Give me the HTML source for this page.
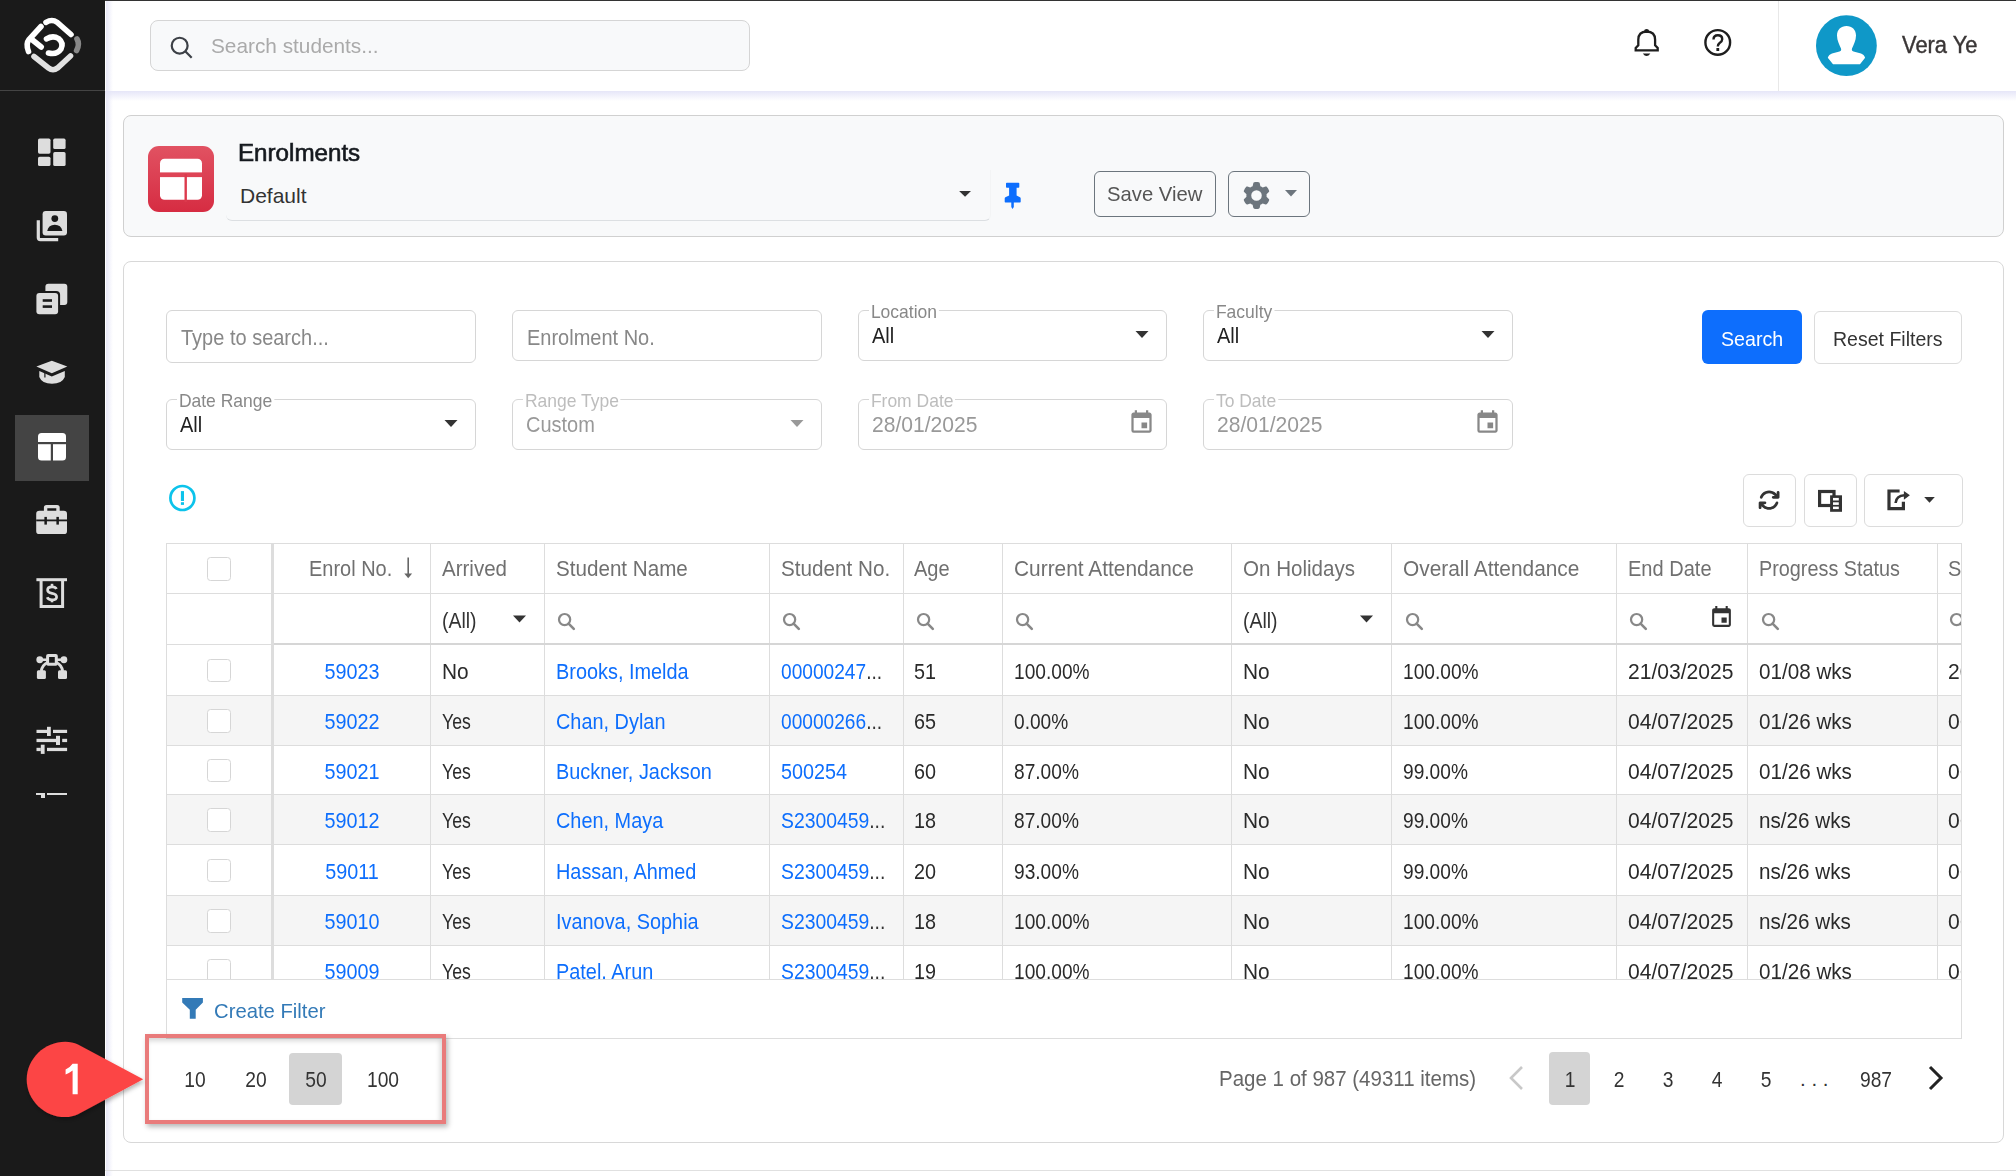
<!DOCTYPE html><html><head><meta charset="utf-8"><style>
html,body{margin:0;padding:0;width:2016px;height:1176px;overflow:hidden;background:#fff;font-family:"Liberation Sans", sans-serif;}
.t{position:absolute;white-space:nowrap;}
</style></head><body>
<div style="position:absolute;left:0px;top:0px;width:2016px;height:1px;background:#333"></div>
<div style="position:absolute;left:0px;top:0px;width:105px;height:1176px;background:#1a1a1a"></div>
<div style="position:absolute;left:0px;top:90px;width:105px;height:1px;background:#444"></div>
<svg style="position:absolute;left:0px;top:0px;" width="104" height="90" viewBox="0 0 104 90">
<g fill="none" stroke-linecap="round" stroke-width="5.6">
<path d="M46 22.3 Q52 18.8 57 22.2 L71 34.5" stroke="#fff"/>
<path d="M41 26.5 L29 39.5 Q25.5 44 28.5 51.5" stroke="#fff"/>
<path d="M32.5 40 L41.2 47" stroke="#fff"/>
<path d="M46.5 38.8 Q53 35 58.5 38.5 Q64 43 61 49 Q57 55 48.5 53" stroke="#fff"/>
<path d="M77 39 Q80 44 76.6 50.5" stroke="#888"/>
<path d="M34 56.5 L48.5 68 Q53 71.5 57.5 68 L70.5 56" stroke="#e2e2e2"/>
</g></svg>
<div style="position:absolute;left:15px;top:415px;width:74px;height:66px;background:#444"></div>
<svg style="position:absolute;left:30px;top:130px;" width="44" height="120" viewBox="30 130 44 120">
<rect x="38" y="138.6" width="12.5" height="15.1" rx="1.6" fill="#ddd"/>
<rect x="53.2" y="138.6" width="12.4" height="10.4" rx="1.6" fill="#ddd"/>
<rect x="38" y="156.7" width="12.5" height="9.3" rx="1.6" fill="#ddd"/>
<rect x="53.2" y="152.1" width="12.4" height="13.9" rx="1.6" fill="#ddd"/>
<rect x="42.6" y="211" width="24.4" height="24.4" rx="3.2" fill="#ddd"/>
<circle cx="54.8" cy="218.6" r="3.4" fill="#1a1a1a"/>
<path d="M47.2 230.9 Q48.5 224.8 54.8 224.8 Q61.1 224.8 62.4 230.9 Z" fill="#1a1a1a"/>
<path d="M38.3 220.2 L38.3 237.5 Q38.3 239.6 40.4 239.6 L58.2 239.6" fill="none" stroke="#ddd" stroke-width="3.2"/></svg>
<svg style="position:absolute;left:30px;top:275px;" width="44" height="44" viewBox="30 275 44 44">
<rect x="45.4" y="283.8" width="21.9" height="21.2" rx="3" fill="#ddd"/>
<rect x="34.4" y="291" width="25.7" height="25.2" rx="4" fill="#1a1a1a"/>
<rect x="36.4" y="293" width="21.7" height="21.2" rx="3" fill="#ddd"/>
<rect x="42.7" y="299.2" width="9.3" height="2.6" fill="#1a1a1a"/>
<rect x="42.7" y="305.3" width="9.3" height="2.6" fill="#1a1a1a"/></svg>
<svg style="position:absolute;left:30px;top:350px;" width="44" height="44" viewBox="30 350 44 44">
<path d="M36.4 366.4 L51.8 360.8 L67.3 366.4 L51.8 373.3 Z" fill="#ddd"/>
<path d="M39.3 371 L39.3 377 Q42 383.8 52 383.8 Q62 383.8 64.8 377 L64.8 371 L51.8 376.5 Z" fill="#ddd"/>
<rect x="44.3" y="372.5" width="1.2" height="5" fill="#1a1a1a"/></svg>
<svg style="position:absolute;left:30px;top:425px;" width="44" height="44" viewBox="30 425 44 44">
<rect x="38" y="433" width="28" height="27.5" rx="3.5" fill="#fff"/>
<rect x="38" y="442" width="28" height="2.2" fill="#444"/>
<rect x="50.8" y="442" width="2.2" height="20" fill="#444"/></svg>
<svg style="position:absolute;left:30px;top:497px;" width="44" height="44" viewBox="30 497 44 44">
<path d="M43.9 511 L43.9 507.5 Q43.9 504.9 46.5 504.9 L57.1 504.9 Q59.7 504.9 59.7 507.5 L59.7 511 L56.3 511 L56.3 508.3 L47.3 508.3 L47.3 511 Z" fill="#ddd"/>
<rect x="36.2" y="510.8" width="30.8" height="23.3" rx="3.2" fill="#ddd"/>
<rect x="36.2" y="519.5" width="30.8" height="1.8" fill="#1a1a1a"/>
<rect x="44.4" y="516.9" width="2.5" height="7.7" fill="#1a1a1a"/>
<rect x="56.4" y="516.9" width="2.5" height="7.7" fill="#1a1a1a"/></svg>
<svg style="position:absolute;left:30px;top:571px;" width="44" height="44" viewBox="30 571 44 44">
<rect x="36.4" y="578.2" width="30.6" height="3" fill="#ddd"/>
<path d="M41.1 581 L41.1 606.6 L62.6 606.6 L62.6 581" fill="none" stroke="#ddd" stroke-width="3"/>
<path d="M56.4 589 Q55.6 586.8 52 586.8 Q47.6 586.8 47.6 589.9 Q47.6 592.5 52 593.3 Q56.6 594.1 56.6 596.9 Q56.6 599.8 52 599.8 Q48.2 599.8 47.2 597.3" fill="none" stroke="#ddd" stroke-width="2.7"/>
<rect x="50.7" y="583.8" width="2.6" height="3.5" fill="#ddd"/><rect x="50.7" y="599.3" width="2.6" height="3" fill="#ddd"/></svg>
<svg style="position:absolute;left:30px;top:645px;" width="44" height="44" viewBox="30 645 44 44">
<line x1="39.75" y1="659.75" x2="47" y2="659.75" stroke="#ddd" stroke-width="2.6"/>
<line x1="57" y1="659.75" x2="63.9" y2="659.75" stroke="#ddd" stroke-width="2.6"/>
<circle cx="39.75" cy="659.75" r="3.4" fill="#ddd"/><circle cx="63.9" cy="659.75" r="3.4" fill="#ddd"/>
<path d="M47.5 662.5 Q42.2 665 41.3 671" fill="none" stroke="#ddd" stroke-width="3"/>
<path d="M56.4 662.5 Q61.7 665 62.6 671" fill="none" stroke="#ddd" stroke-width="3"/>
<rect x="47.6" y="655.5" width="8.7" height="8.7" rx="0.5" fill="none" stroke="#ddd" stroke-width="3"/>
<rect x="36.9" y="670.3" width="9" height="8.8" rx="1.5" fill="#ddd"/>
<rect x="58" y="670.3" width="9" height="8.8" rx="1.5" fill="#ddd"/></svg>
<svg style="position:absolute;left:30px;top:718px;" width="44" height="44" viewBox="30 718 44 44">
<rect x="36.5" y="729.8" width="10.5" height="3.2" fill="#ddd"/><rect x="47" y="726.8" width="3.8" height="9.2" fill="#ddd"/><rect x="53" y="729.8" width="14.1" height="3.2" fill="#ddd"/>
<rect x="36.5" y="738.8" width="19.5" height="3.3" fill="#ddd"/><rect x="56" y="735.8" width="4" height="9.2" fill="#ddd"/><rect x="62.2" y="738.8" width="4.9" height="3.3" fill="#ddd"/>
<rect x="36.5" y="747.8" width="4.3" height="3.3" fill="#ddd"/><rect x="40.8" y="744.7" width="3.8" height="9.2" fill="#ddd"/><rect x="47" y="747.8" width="20.1" height="3.3" fill="#ddd"/></svg>
<div style="position:absolute;left:36.4px;top:793px;width:8.5px;height:2.1px;background:#ddd"></div>
<div style="position:absolute;left:40.8px;top:793px;width:4.1px;height:5.1px;background:#ddd"></div>
<div style="position:absolute;left:47.1px;top:793px;width:20.1px;height:2.1px;background:#ddd"></div>
<div style="position:absolute;left:106px;top:1px;width:7px;height:1175px;background:linear-gradient(to right,#e8e8f8,rgba(240,240,255,0))"></div>
<div style="position:absolute;left:105px;top:1px;width:1px;height:1175px;background:#fff"></div>
<div style="position:absolute;left:116px;top:1px;width:1900px;height:90px;background:#fff"></div>
<div style="position:absolute;left:105px;top:91px;width:1911px;height:10px;background:linear-gradient(to bottom,#e6e6f8,rgba(246,246,255,0))"></div>
<div style="position:absolute;left:150px;top:20px;width:598px;height:49px;background:#f8f9fa;border:1px solid #d5d5d5;border-radius:8px"></div>
<svg style="position:absolute;left:167.5px;top:33.5px;" width="28" height="28" viewBox="0 0 24 24"><circle cx="10" cy="10" r="6.8" fill="none" stroke="#3c4046" stroke-width="1.9"/><line x1="15" y1="15" x2="20.3" y2="20.3" stroke="#3c4046" stroke-width="1.9" stroke-linecap="butt"/></svg>
<div class="t" style="left:211px;top:35.10px;font-size:21px;line-height:21px;color:#aaa;transform:scaleX(0.99);transform-origin:0 0;">Search students...</div>
<svg style="position:absolute;left:1625px;top:20px;" width="120" height="50" viewBox="1625 20 120 50"><path d="M1638.3 45.3 L1638.3 39.8 Q1638.3 31.7 1646.7 31.5 Q1655.1 31.7 1655.1 39.8 L1655.1 45.3 L1657.7 47.9 L1657.7 50.4 L1635.7 50.4 L1635.7 47.9 Z" fill="none" stroke="#1e1e1e" stroke-width="2.3" stroke-linejoin="miter"/><ellipse cx="1646.6" cy="30.6" rx="2.4" ry="1.6" fill="#1e1e1e"/><path d="M1642.8 53.5 Q1646.6 58.6 1650.4 53.5 Z" fill="#1e1e1e"/><circle cx="1717.75" cy="42.45" r="12.35" fill="none" stroke="#1e1e1e" stroke-width="2.4"/><path d="M1713.5 39.6 Q1713.5 35.3 1717.9 35.3 Q1722.2 35.3 1722.2 39.2 Q1722.2 41.3 1719.6 43 Q1717.8 44.3 1717.8 46.6" fill="none" stroke="#1e1e1e" stroke-width="2.4"/><rect x="1716.4" y="48" width="2.8" height="3" fill="#1e1e1e"/></svg>
<div style="position:absolute;left:1778px;top:1px;width:1px;height:90px;background:#e8e8e8"></div>
<svg style="position:absolute;left:1815px;top:15px;" width="62" height="62" viewBox="0 0 62 62"><circle cx="31.4" cy="30.65" r="30.4" fill="#0f98c8"/><path fill="#fff" d="M31.5 10.9 C26 10.9 22 14.5 22 20.5 C22 25.5 24.5 30 26 33.5 C26.5 35 26 36 24.5 36.6 L17 38.5 C15 39.2 13.5 40.5 12.8 42.8 L18 49.2 L45 49.2 L50.1 42.8 C49.4 40.5 48 39.2 46 38.5 L38.5 36.6 C37 36 36.5 35 37 33.5 C38.5 30 41 25.5 41 20.5 C41 14.5 37 10.9 31.5 10.9 Z"/></svg>
<div class="t" style="left:1902px;top:33.25px;font-size:24.3px;line-height:24.3px;color:#3a3636;transform:scaleX(0.9);transform-origin:0 0;-webkit-text-stroke:0.45px #3a3636">Vera Ye</div>
<div style="position:absolute;left:123px;top:115px;width:1879px;height:120px;background:#f8f9fa;border:1px solid #d0d0d0;border-radius:8px"></div>
<svg style="position:absolute;left:148px;top:146px;" width="66" height="66" viewBox="0 0 66 66"><defs><linearGradient id="rg" x1="0" y1="0" x2="0" y2="1"><stop offset="0" stop-color="#e15262"/><stop offset="1" stop-color="#d62c42"/></linearGradient></defs><rect width="66" height="66" rx="11" fill="url(#rg)"/><rect x="12" y="12.8" width="42" height="41" rx="4.5" fill="#fff"/><rect x="12" y="26.4" width="42" height="4.7" fill="#de4456"/><rect x="36.5" y="28" width="2.4" height="28" fill="#dc3a4d"/></svg>
<div class="t" style="left:238px;top:142.45px;font-size:23.5px;line-height:23.5px;color:#15191e;transform:scaleX(1.028);transform-origin:0 0;-webkit-text-stroke:0.6px #15191e">Enrolments</div>
<div style="position:absolute;left:226px;top:170px;width:764px;height:50px;border-bottom:1px solid #dcdfe2;border-right:1px solid #f3f4f5;border-radius:0 0 6px 6px"></div>
<div class="t" style="left:240px;top:185.00px;font-size:21px;line-height:21px;color:#333;">Default</div>
<svg style="position:absolute;left:958px;top:189px;" width="14" height="9" viewBox="0 0 14 9"><path d="M1.1 2 L13 2 L7.05 7.8 Z" fill="#333"/></svg>
<svg style="position:absolute;left:1000px;top:180px;" width="24" height="32" viewBox="1000 180 24 32"><path fill="#0d6efd" d="M1006.8 182.7 L1018.5 182.7 Q1019.3 182.7 1019.3 183.5 L1019.3 187 Q1019.3 187.7 1018.5 187.7 L1016.6 187.7 L1016.6 195.5 L1020 197.3 Q1020.7 197.8 1020.7 198.5 L1020.7 201.8 Q1020.7 202.6 1020 202.6 L1013.8 202.6 L1013.8 207 L1012.55 209 L1011.3 207 L1011.3 202.6 L1005.4 202.6 Q1004.7 202.6 1004.7 201.8 L1004.7 198.5 Q1004.7 197.8 1005.4 197.3 L1009.1 195.5 L1009.1 187.7 L1006.8 187.7 Q1006 187.7 1006 187 L1006 183.5 Q1006 182.7 1006.8 182.7 Z"/></svg>
<div style="position:absolute;left:1094px;top:171px;width:120px;height:44px;border:1px solid #6c757d;border-radius:6px"></div>
<div class="t" style="left:1107px;top:183.30px;font-size:21px;line-height:21px;color:#555;transform:scaleX(0.965);transform-origin:0 0;">Save View</div>
<div style="position:absolute;left:1228px;top:171px;width:80px;height:44px;border:1px solid #6c757d;border-radius:6px"></div>
<svg style="position:absolute;left:1243px;top:182px;" width="27" height="27" viewBox="0 0 512 512"><circle cx="256" cy="256" r="100" fill="#f8f9fa"/><path fill="#6c757d" d="M495.9 166.6c3.2 8.7 .5 18.4-6.4 24.6l-43.3 39.4c1.1 8.3 1.7 16.8 1.7 25.4s-.6 17.1-1.7 25.4l43.3 39.4c6.9 6.2 9.6 15.9 6.4 24.6c-4.4 11.9-9.7 23.3-15.8 34.3l-4.7 8.1c-6.6 11-14 21.4-22.1 31.2c-5.9 7.2-15.7 9.6-24.5 6.8l-55.7-17.7c-13.4 10.3-28.2 18.9-44 25.4l-12.5 57.1c-2 9.1-9 16.3-18.2 17.8c-13.8 2.3-28 3.5-42.5 3.5s-28.7-1.2-42.5-3.5c-9.2-1.5-16.2-8.7-18.2-17.8l-12.5-57.1c-15.8-6.5-30.6-15.1-44-25.4L83.1 425.9c-8.8 2.8-18.6 .3-24.5-6.8c-8.1-9.8-15.5-20.2-22.1-31.2l-4.7-8.1c-6.1-11-11.4-22.4-15.8-34.3c-3.2-8.7-.5-18.4 6.4-24.6l43.3-39.4C64.6 273.1 64 264.6 64 256s.6-17.1 1.7-25.4L22.4 191.2c-6.9-6.2-9.6-15.9-6.4-24.6c4.4-11.9 9.700-23.3 15.8-34.3l4.7-8.1c6.6-11 14-21.4 22.1-31.2c5.9-7.200 15.7-9.6 24.5-6.8l55.7 17.7c13.4-10.3 28.2-18.9 44-25.4l12.5-57.1c2-9.1 9-16.3 18.2-17.8C227.3 1.2 241.5 0 256 0s28.7 1.2 42.5 3.5c9.2 1.5 16.2 8.7 18.2 17.8l12.5 57.1c15.8 6.5 30.6 15.1 44 25.4l55.7-17.7c8.8-2.8 18.6-.3 24.5 6.8c8.1 9.8 15.5 20.2 22.1 31.2l4.7 8.1c6.1 11 11.4 22.4 15.8 34.3zM256 356a100 100 0 1 0 0-200 100 100 0 1 0 0 200z"/></svg>
<svg style="position:absolute;left:1284px;top:189px;" width="14" height="9" viewBox="0 0 14 9"><path d="M1 1 L13 1 L7 7.5 Z" fill="#6c757d"/></svg>
<div style="position:absolute;left:123px;top:261px;width:1879px;height:880px;background:#fff;border:1px solid #d8d8d8;border-radius:8px"></div>
<div style="position:absolute;left:105px;top:1170px;width:1911px;height:1px;background:#e0e0e0"></div>
<div style="position:absolute;left:166px;top:310px;width:308px;height:51px;border:1px solid #d6d6d6;border-radius:6px;background:#fff"></div>
<div class="t" style="left:181px;top:327.85px;font-size:21.5px;line-height:21.5px;color:#888;transform:scaleX(0.93);transform-origin:0 0;">Type to search...</div>
<div style="position:absolute;left:512px;top:310px;width:308px;height:49px;border:1px solid #d6d6d6;border-radius:6px;background:#fff"></div>
<div class="t" style="left:527px;top:327.85px;font-size:21.5px;line-height:21.5px;color:#888;transform:scaleX(0.93);transform-origin:0 0;">Enrolment No.</div>
<div style="position:absolute;left:858px;top:310px;width:307px;height:49px;border:1px solid #d6d6d6;border-radius:6px;background:#fff"></div>
<div class="t" style="left:869px;top:303.05px;font-size:18.5px;line-height:18.5px;color:#888;background:#fff;padding:0 2px;transform:scaleX(0.945);transform-origin:0 0">Location</div>
<div class="t" style="left:872px;top:325.95px;font-size:21.5px;line-height:21.5px;color:#222;transform:scaleX(0.93);transform-origin:0 0;">All</div>
<svg style="position:absolute;left:1135px;top:330px;" width="14" height="9" viewBox="0 0 14 9"><path d="M0.5 1 L13.5 1 L7 8 Z" fill="#333"/></svg>
<div style="position:absolute;left:1203px;top:310px;width:308px;height:49px;border:1px solid #d6d6d6;border-radius:6px;background:#fff"></div>
<div class="t" style="left:1214px;top:303.05px;font-size:18.5px;line-height:18.5px;color:#888;background:#fff;padding:0 2px;transform:scaleX(0.945);transform-origin:0 0">Faculty</div>
<div class="t" style="left:1217px;top:325.95px;font-size:21.5px;line-height:21.5px;color:#222;transform:scaleX(0.93);transform-origin:0 0;">All</div>
<svg style="position:absolute;left:1481px;top:330px;" width="14" height="9" viewBox="0 0 14 9"><path d="M0.5 1 L13.5 1 L7 8 Z" fill="#333"/></svg>
<div style="position:absolute;left:166px;top:399px;width:308px;height:49px;border:1px solid #d6d6d6;border-radius:6px;background:#fff"></div>
<div class="t" style="left:177px;top:392.05px;font-size:18.5px;line-height:18.5px;color:#888;background:#fff;padding:0 2px;transform:scaleX(0.945);transform-origin:0 0">Date Range</div>
<div class="t" style="left:180px;top:414.95px;font-size:21.5px;line-height:21.5px;color:#222;transform:scaleX(0.93);transform-origin:0 0;">All</div>
<svg style="position:absolute;left:444px;top:419px;" width="14" height="9" viewBox="0 0 14 9"><path d="M0.5 1 L13.5 1 L7 8 Z" fill="#333"/></svg>
<div style="position:absolute;left:512px;top:399px;width:308px;height:49px;border:1px solid #d6d6d6;border-radius:6px;background:#fff"></div>
<div class="t" style="left:523px;top:392.05px;font-size:18.5px;line-height:18.5px;color:#bdbdbd;background:#fff;padding:0 2px;transform:scaleX(0.945);transform-origin:0 0">Range Type</div>
<div class="t" style="left:526px;top:414.95px;font-size:21.5px;line-height:21.5px;color:#999;transform:scaleX(0.93);transform-origin:0 0;">Custom</div>
<svg style="position:absolute;left:790px;top:419px;" width="14" height="9" viewBox="0 0 14 9"><path d="M0.5 1 L13.5 1 L7 8 Z" fill="#999"/></svg>
<div style="position:absolute;left:858px;top:399px;width:307px;height:49px;border:1px solid #d6d6d6;border-radius:6px;background:#fff"></div>
<div class="t" style="left:869px;top:392.05px;font-size:18.5px;line-height:18.5px;color:#bdbdbd;background:#fff;padding:0 2px;transform:scaleX(0.945);transform-origin:0 0">From Date</div>
<div class="t" style="left:872px;top:414.95px;font-size:21.5px;line-height:21.5px;color:#999;transform:scaleX(0.98);transform-origin:0 0;">28/01/2025</div>
<svg style="position:absolute;left:1127.5px;top:408.5px;" width="27" height="27" viewBox="0 0 24 24"><path fill="#888" d="M17 12h-5v5h5v-5zM16 1v2H8V1H6v2H5c-1.11 0-1.99.9-1.99 2L3 19a2 2 0 0 0 2 2h14c1.1 0 2-.9 2-2V5c0-1.1-.9-2-2-2h-1V1h-2zm3 18H5V8h14v11z"/></svg>
<div style="position:absolute;left:1203px;top:399px;width:308px;height:49px;border:1px solid #d6d6d6;border-radius:6px;background:#fff"></div>
<div class="t" style="left:1214px;top:392.05px;font-size:18.5px;line-height:18.5px;color:#bdbdbd;background:#fff;padding:0 2px;transform:scaleX(0.945);transform-origin:0 0">To Date</div>
<div class="t" style="left:1217px;top:414.95px;font-size:21.5px;line-height:21.5px;color:#999;transform:scaleX(0.98);transform-origin:0 0;">28/01/2025</div>
<svg style="position:absolute;left:1473.5px;top:408.5px;" width="27" height="27" viewBox="0 0 24 24"><path fill="#888" d="M17 12h-5v5h5v-5zM16 1v2H8V1H6v2H5c-1.11 0-1.99.9-1.99 2L3 19a2 2 0 0 0 2 2h14c1.1 0 2-.9 2-2V5c0-1.1-.9-2-2-2h-1V1h-2zm3 18H5V8h14v11z"/></svg>
<div style="position:absolute;left:1702px;top:310px;width:100px;height:54px;background:#0d6efd;border-radius:6px"></div>
<div class="t" style="left:1721px;top:328.30px;font-size:21px;line-height:21px;color:#fff;transform:scaleX(0.935);transform-origin:0 0;">Search</div>
<div style="position:absolute;left:1814px;top:311px;width:146px;height:51px;border:1px solid #dcdcdc;border-radius:6px"></div>
<div class="t" style="left:1833px;top:328.30px;font-size:21px;line-height:21px;color:#333;transform:scaleX(0.93);transform-origin:0 0;">Reset Filters</div>
<svg style="position:absolute;left:168px;top:484px;" width="28" height="28" viewBox="0 0 28 28"><circle cx="14.4" cy="14" r="12" fill="none" stroke="#0cc3eb" stroke-width="2.7"/><rect x="12.9" y="7.1" width="3.1" height="9.9" fill="#0cc3eb"/><rect x="12.9" y="18.2" width="3.1" height="2.7" fill="#0cc3eb"/></svg>
<div style="position:absolute;left:1743px;top:474px;width:51px;height:51px;border:1px solid #dcdcdc;border-radius:6px"></div>
<div style="position:absolute;left:1804px;top:474px;width:51px;height:51px;border:1px solid #dcdcdc;border-radius:6px"></div>
<div style="position:absolute;left:1864px;top:474px;width:97px;height:51px;border:1px solid #dcdcdc;border-radius:6px"></div>
<svg style="position:absolute;left:1758.2px;top:488.6px;" width="22.2" height="22.2" viewBox="0 0 512 512"><path fill="#333" d="M105.1 202.6c7.7-21.8 20.2-42.3 37.8-59.8c62.5-62.5 163.8-62.5 226.3 0L386.3 160H352c-17.7 0-32 14.3-32 32s14.3 32 32 32H463.5c0 0 0 0 0 0h.4c17.7 0 32-14.3 32-32V80c0-17.7-14.3-32-32-32s-32 14.3-32 32v35.2L414.4 97.6c-87.5-87.5-229.3-87.5-316.8 0C73.2 122 55.6 150.7 44.8 181.400c-5.9 16.700 2.9 34.900 19.500 40.800s34.900-2.900 40.800-19.500zM39 289.300c-5 1.500-9.8 4.200-13.700 8.200c-4 4-6.700 8.800-8.100 14c-.3 1.200-.6 2.500-.8 3.800c-.3 1.700-.4 3.400-.4 5.100V432c0 17.700 14.300 32 32 32s32-14.300 32-32V396.900l17.600 17.500 0 0c87.500 87.400 229.300 87.400 316.700 0c24.400-24.400 42.100-53.100 52.900-83.700c5.900-16.700-2.900-34.900-19.500-40.800s-34.900 2.900-40.800 19.500c-7.700 21.800-20.200 42.300-37.800 59.800c-62.500 62.500-163.800 62.500-226.300 0l-.1-.1L125.600 352H160c17.700 0 32-14.300 32-32s-14.300-32-32-32H48.400c-1.600 0-3.200 .1-4.800 .3s-3.100 .5-4.600 1z"/></svg>
<svg style="position:absolute;left:1810px;top:485px;" width="40" height="32" viewBox="1810 485 40 32"><rect x="1819.6" y="491.5" width="14.4" height="14" fill="none" stroke="#333" stroke-width="3.2"/><rect x="1830.1" y="495.3" width="11.9" height="16.5" fill="#333"/><rect x="1833" y="497.9" width="5.8" height="2.6" fill="#fff"/><rect x="1833" y="502.3" width="5.8" height="2.6" fill="#fff"/><rect x="1833" y="506.6" width="5.8" height="2.5" fill="#fff"/></svg>
<svg style="position:absolute;left:1880px;top:485px;" width="60" height="32" viewBox="1880 485 60 32"><path d="M1899.6 491 L1889 491 L1889 508.6 L1903.4 508.6 L1903.4 501.7" fill="none" stroke="#333" stroke-width="3.2"/><path d="M1895.6 503 Q1896.3 495.6 1904.5 495.3" fill="none" stroke="#333" stroke-width="2.6"/><path d="M1903.9 490.9 L1909.9 495.3 L1903.9 499.7 Z" fill="#333"/><path d="M1924.2 496.9 L1934.8 496.9 L1929.5 502.7 Z" fill="#333"/></svg>
<div style="position:absolute;left:166px;top:543px;width:1796px;height:436.5px;overflow:hidden">
<div style="position:absolute;left:0px;top:152px;width:1796px;height:50px;background:#f5f5f5"></div>
<div style="position:absolute;left:0px;top:251px;width:1796px;height:50px;background:#f5f5f5"></div>
<div style="position:absolute;left:0px;top:352px;width:1796px;height:50px;background:#f5f5f5"></div>
<div style="position:absolute;left:0px;top:0px;width:1796px;height:1px;background:#ddd"></div>
<div style="position:absolute;left:0px;top:50px;width:1796px;height:1px;background:#ddd"></div>
<div style="position:absolute;left:0px;top:101px;width:1796px;height:1px;background:#ddd"></div>
<div style="position:absolute;left:0px;top:152px;width:1796px;height:1px;background:#ddd"></div>
<div style="position:absolute;left:0px;top:202px;width:1796px;height:1px;background:#ddd"></div>
<div style="position:absolute;left:0px;top:251px;width:1796px;height:1px;background:#ddd"></div>
<div style="position:absolute;left:0px;top:301px;width:1796px;height:1px;background:#ddd"></div>
<div style="position:absolute;left:0px;top:352px;width:1796px;height:1px;background:#ddd"></div>
<div style="position:absolute;left:0px;top:402px;width:1796px;height:1px;background:#ddd"></div>
<div style="position:absolute;left:0px;top:452px;width:1796px;height:1px;background:#ddd"></div>
<div style="position:absolute;left:0px;top:0px;width:1px;height:600px;background:#ddd"></div>
<div style="position:absolute;left:106px;top:0px;width:1px;height:600px;background:#ddd"></div>
<div style="position:absolute;left:264px;top:0px;width:1px;height:600px;background:#ddd"></div>
<div style="position:absolute;left:378px;top:0px;width:1px;height:600px;background:#ddd"></div>
<div style="position:absolute;left:603px;top:0px;width:1px;height:600px;background:#ddd"></div>
<div style="position:absolute;left:737px;top:0px;width:1px;height:600px;background:#ddd"></div>
<div style="position:absolute;left:836px;top:0px;width:1px;height:600px;background:#ddd"></div>
<div style="position:absolute;left:1065px;top:0px;width:1px;height:600px;background:#ddd"></div>
<div style="position:absolute;left:1225px;top:0px;width:1px;height:600px;background:#ddd"></div>
<div style="position:absolute;left:1450px;top:0px;width:1px;height:600px;background:#ddd"></div>
<div style="position:absolute;left:1581px;top:0px;width:1px;height:600px;background:#ddd"></div>
<div style="position:absolute;left:1771px;top:0px;width:1px;height:600px;background:#ddd"></div>
<div style="position:absolute;left:105px;top:0px;width:3px;height:600px;background:#ddd"></div>
<div style="position:absolute;left:108px;top:100px;width:1688px;height:2px;background:#d6d6d6"></div>
<div class="t" style="left:143px;top:16.45px;font-size:21.5px;line-height:21.5px;color:#707070;transform:scaleX(0.929);transform-origin:0 0;">Enrol No.</div>
<svg style="position:absolute;left:235px;top:13px" width="14" height="24" viewBox="0 0 14 24"><path d="M7.2 1.5 V18" fill="none" stroke="#666" stroke-width="1.6"/><path d="M3.3 17.5 L11.1 17.5 L7.2 22.3 Z" fill="#666"/></svg>
<div class="t" style="left:276px;top:16.45px;font-size:21.5px;line-height:21.5px;color:#707070;transform:scaleX(0.954);transform-origin:0 0;">Arrived</div>
<div class="t" style="left:390px;top:16.45px;font-size:21.5px;line-height:21.5px;color:#707070;transform:scaleX(0.959);transform-origin:0 0;">Student Name</div>
<div class="t" style="left:615px;top:16.45px;font-size:21.5px;line-height:21.5px;color:#707070;transform:scaleX(0.961);transform-origin:0 0;">Student No.</div>
<div class="t" style="left:748px;top:16.45px;font-size:21.5px;line-height:21.5px;color:#707070;transform:scaleX(0.932);transform-origin:0 0;">Age</div>
<div class="t" style="left:848px;top:16.45px;font-size:21.5px;line-height:21.5px;color:#707070;transform:scaleX(0.971);transform-origin:0 0;">Current Attendance</div>
<div class="t" style="left:1077px;top:16.45px;font-size:21.5px;line-height:21.5px;color:#707070;transform:scaleX(0.956);transform-origin:0 0;">On Holidays</div>
<div class="t" style="left:1237px;top:16.45px;font-size:21.5px;line-height:21.5px;color:#707070;transform:scaleX(0.971);transform-origin:0 0;">Overall Attendance</div>
<div class="t" style="left:1462px;top:16.45px;font-size:21.5px;line-height:21.5px;color:#707070;transform:scaleX(0.932);transform-origin:0 0;">End Date</div>
<div class="t" style="left:1593px;top:16.45px;font-size:21.5px;line-height:21.5px;color:#707070;transform:scaleX(0.922);transform-origin:0 0;">Progress Status</div>
<div class="t" style="left:1782px;top:16.45px;font-size:21.5px;line-height:21.5px;color:#707070;transform:scaleX(0.93);transform-origin:0 0;">Start Date</div>
<div style="position:absolute;left:41px;top:14.200000000000045px;width:23.5px;height:23.5px;border:1px solid #d6d6d6;border-radius:3.5px;background:#fff;box-sizing:border-box"></div>
<div class="t" style="left:276px;top:67.85px;font-size:21.5px;line-height:21.5px;color:#333;transform:scaleX(0.903);transform-origin:0 0;">(All)</div>
<svg style="position:absolute;left:346.5px;top:71.5px" width="13" height="8" viewBox="0 0 13 8"><path d="M0 0.5 L13 0.5 L6.5 7.5 Z" fill="#333"/></svg>
<div class="t" style="left:1077px;top:67.85px;font-size:21.5px;line-height:21.5px;color:#333;transform:scaleX(0.903);transform-origin:0 0;">(All)</div>
<svg style="position:absolute;left:1193.5px;top:71.5px" width="13" height="8" viewBox="0 0 13 8"><path d="M0 0.5 L13 0.5 L6.5 7.5 Z" fill="#333"/></svg>
<svg style="position:absolute;left:391px;top:69px" width="20" height="20" viewBox="0 0 20 20"><circle cx="7.6" cy="7.6" r="5.6" fill="none" stroke="#888" stroke-width="2.2"/><line x1="11.6" y1="11.6" x2="16.8" y2="16.8" stroke="#888" stroke-width="2.6" stroke-linecap="round"/></svg>
<svg style="position:absolute;left:616px;top:69px" width="20" height="20" viewBox="0 0 20 20"><circle cx="7.6" cy="7.6" r="5.6" fill="none" stroke="#888" stroke-width="2.2"/><line x1="11.6" y1="11.6" x2="16.8" y2="16.8" stroke="#888" stroke-width="2.6" stroke-linecap="round"/></svg>
<svg style="position:absolute;left:750px;top:69px" width="20" height="20" viewBox="0 0 20 20"><circle cx="7.6" cy="7.6" r="5.6" fill="none" stroke="#888" stroke-width="2.2"/><line x1="11.6" y1="11.6" x2="16.8" y2="16.8" stroke="#888" stroke-width="2.6" stroke-linecap="round"/></svg>
<svg style="position:absolute;left:849px;top:69px" width="20" height="20" viewBox="0 0 20 20"><circle cx="7.6" cy="7.6" r="5.6" fill="none" stroke="#888" stroke-width="2.2"/><line x1="11.6" y1="11.6" x2="16.8" y2="16.8" stroke="#888" stroke-width="2.6" stroke-linecap="round"/></svg>
<svg style="position:absolute;left:1239px;top:69px" width="20" height="20" viewBox="0 0 20 20"><circle cx="7.6" cy="7.6" r="5.6" fill="none" stroke="#888" stroke-width="2.2"/><line x1="11.6" y1="11.6" x2="16.8" y2="16.8" stroke="#888" stroke-width="2.6" stroke-linecap="round"/></svg>
<svg style="position:absolute;left:1463px;top:69px" width="20" height="20" viewBox="0 0 20 20"><circle cx="7.6" cy="7.6" r="5.6" fill="none" stroke="#888" stroke-width="2.2"/><line x1="11.6" y1="11.6" x2="16.8" y2="16.8" stroke="#888" stroke-width="2.6" stroke-linecap="round"/></svg>
<svg style="position:absolute;left:1595px;top:69px" width="20" height="20" viewBox="0 0 20 20"><circle cx="7.6" cy="7.6" r="5.6" fill="none" stroke="#888" stroke-width="2.2"/><line x1="11.6" y1="11.6" x2="16.8" y2="16.8" stroke="#888" stroke-width="2.6" stroke-linecap="round"/></svg>
<svg style="position:absolute;left:1783px;top:69px" width="20" height="20" viewBox="0 0 20 20"><circle cx="7.6" cy="7.6" r="5.6" fill="none" stroke="#888" stroke-width="2.2"/><line x1="11.6" y1="11.6" x2="16.8" y2="16.8" stroke="#888" stroke-width="2.6" stroke-linecap="round"/></svg>
<svg style="position:absolute;left:1543px;top:62px" width="25" height="25" viewBox="0 0 24 24"><path fill="#333" d="M17 12h-5v5h5v-5zM16 1v2H8V1H6v2H5c-1.11 0-1.99.9-1.99 2L3 19a2 2 0 0 0 2 2h14c1.1 0 2-.9 2-2V5c0-1.1-.9-2-2-2h-1V1h-2zm3 18H5V8h14v11z"/></svg>
<div style="position:absolute;left:41px;top:115.54999999999995px;width:23.5px;height:23.5px;border:1px solid #d6d6d6;border-radius:3.5px;background:#fff;box-sizing:border-box"></div>
<div class="t" style="left:85.5px;width:200px;text-align:center;top:118.95px;font-size:21.5px;line-height:21.5px;color:#0d6efd;transform:scaleX(0.92);transform-origin:50% 0">59023</div>
<div class="t" style="left:276px;top:118.95px;font-size:21.5px;line-height:21.5px;color:#2a2a2a;transform:scaleX(0.97);transform-origin:0 0;">No</div>
<div class="t" style="left:390px;top:118.95px;font-size:21.5px;line-height:21.5px;color:#0d6efd;transform:scaleX(0.925);transform-origin:0 0;">Brooks, Imelda</div>
<div class="t" style="left:615px;top:118.95px;font-size:21.5px;line-height:21.5px;color:#0d6efd;transform:scaleX(0.89);transform-origin:0 0;">00000247<span style="color:#333">...</span></div>
<div class="t" style="left:748px;top:118.95px;font-size:21.5px;line-height:21.5px;color:#2a2a2a;transform:scaleX(0.92);transform-origin:0 0;">51</div>
<div class="t" style="left:848px;top:118.95px;font-size:21.5px;line-height:21.5px;color:#2a2a2a;transform:scaleX(0.89);transform-origin:0 0;">100.00%</div>
<div class="t" style="left:1077px;top:118.95px;font-size:21.5px;line-height:21.5px;color:#2a2a2a;transform:scaleX(0.97);transform-origin:0 0;">No</div>
<div class="t" style="left:1237px;top:118.95px;font-size:21.5px;line-height:21.5px;color:#2a2a2a;transform:scaleX(0.89);transform-origin:0 0;">100.00%</div>
<div class="t" style="left:1462px;top:118.95px;font-size:21.5px;line-height:21.5px;color:#2a2a2a;transform:scaleX(0.98);transform-origin:0 0;">21/03/2025</div>
<div class="t" style="left:1593px;top:118.95px;font-size:21.5px;line-height:21.5px;color:#2a2a2a;transform:scaleX(0.96);transform-origin:0 0;">01/08 wks</div>
<div class="t" style="left:1782px;top:118.95px;font-size:21.5px;line-height:21.5px;color:#2a2a2a;transform:scaleX(0.98);transform-origin:0 0;">20/01/2025</div>
<div style="position:absolute;left:41px;top:166.04999999999995px;width:23.5px;height:23.5px;border:1px solid #d6d6d6;border-radius:3.5px;background:#fff;box-sizing:border-box"></div>
<div class="t" style="left:85.5px;width:200px;text-align:center;top:169.45px;font-size:21.5px;line-height:21.5px;color:#0d6efd;transform:scaleX(0.92);transform-origin:50% 0">59022</div>
<div class="t" style="left:276px;top:169.45px;font-size:21.5px;line-height:21.5px;color:#2a2a2a;transform:scaleX(0.82);transform-origin:0 0;">Yes</div>
<div class="t" style="left:390px;top:169.45px;font-size:21.5px;line-height:21.5px;color:#0d6efd;transform:scaleX(0.925);transform-origin:0 0;">Chan, Dylan</div>
<div class="t" style="left:615px;top:169.45px;font-size:21.5px;line-height:21.5px;color:#0d6efd;transform:scaleX(0.89);transform-origin:0 0;">00000266<span style="color:#333">...</span></div>
<div class="t" style="left:748px;top:169.45px;font-size:21.5px;line-height:21.5px;color:#2a2a2a;transform:scaleX(0.92);transform-origin:0 0;">65</div>
<div class="t" style="left:848px;top:169.45px;font-size:21.5px;line-height:21.5px;color:#2a2a2a;transform:scaleX(0.89);transform-origin:0 0;">0.00%</div>
<div class="t" style="left:1077px;top:169.45px;font-size:21.5px;line-height:21.5px;color:#2a2a2a;transform:scaleX(0.97);transform-origin:0 0;">No</div>
<div class="t" style="left:1237px;top:169.45px;font-size:21.5px;line-height:21.5px;color:#2a2a2a;transform:scaleX(0.89);transform-origin:0 0;">100.00%</div>
<div class="t" style="left:1462px;top:169.45px;font-size:21.5px;line-height:21.5px;color:#2a2a2a;transform:scaleX(0.98);transform-origin:0 0;">04/07/2025</div>
<div class="t" style="left:1593px;top:169.45px;font-size:21.5px;line-height:21.5px;color:#2a2a2a;transform:scaleX(0.96);transform-origin:0 0;">01/26 wks</div>
<div class="t" style="left:1782px;top:169.45px;font-size:21.5px;line-height:21.5px;color:#2a2a2a;transform:scaleX(0.98);transform-origin:0 0;">06/01/2025</div>
<div style="position:absolute;left:41px;top:215.54999999999995px;width:23.5px;height:23.5px;border:1px solid #d6d6d6;border-radius:3.5px;background:#fff;box-sizing:border-box"></div>
<div class="t" style="left:85.5px;width:200px;text-align:center;top:218.95px;font-size:21.5px;line-height:21.5px;color:#0d6efd;transform:scaleX(0.92);transform-origin:50% 0">59021</div>
<div class="t" style="left:276px;top:218.95px;font-size:21.5px;line-height:21.5px;color:#2a2a2a;transform:scaleX(0.82);transform-origin:0 0;">Yes</div>
<div class="t" style="left:390px;top:218.95px;font-size:21.5px;line-height:21.5px;color:#0d6efd;transform:scaleX(0.925);transform-origin:0 0;">Buckner, Jackson</div>
<div class="t" style="left:615px;top:218.95px;font-size:21.5px;line-height:21.5px;color:#0d6efd;transform:scaleX(0.92);transform-origin:0 0;">500254</div>
<div class="t" style="left:748px;top:218.95px;font-size:21.5px;line-height:21.5px;color:#2a2a2a;transform:scaleX(0.92);transform-origin:0 0;">60</div>
<div class="t" style="left:848px;top:218.95px;font-size:21.5px;line-height:21.5px;color:#2a2a2a;transform:scaleX(0.89);transform-origin:0 0;">87.00%</div>
<div class="t" style="left:1077px;top:218.95px;font-size:21.5px;line-height:21.5px;color:#2a2a2a;transform:scaleX(0.97);transform-origin:0 0;">No</div>
<div class="t" style="left:1237px;top:218.95px;font-size:21.5px;line-height:21.5px;color:#2a2a2a;transform:scaleX(0.89);transform-origin:0 0;">99.00%</div>
<div class="t" style="left:1462px;top:218.95px;font-size:21.5px;line-height:21.5px;color:#2a2a2a;transform:scaleX(0.98);transform-origin:0 0;">04/07/2025</div>
<div class="t" style="left:1593px;top:218.95px;font-size:21.5px;line-height:21.5px;color:#2a2a2a;transform:scaleX(0.96);transform-origin:0 0;">01/26 wks</div>
<div class="t" style="left:1782px;top:218.95px;font-size:21.5px;line-height:21.5px;color:#2a2a2a;transform:scaleX(0.98);transform-origin:0 0;">06/01/2025</div>
<div style="position:absolute;left:41px;top:265.04999999999995px;width:23.5px;height:23.5px;border:1px solid #d6d6d6;border-radius:3.5px;background:#fff;box-sizing:border-box"></div>
<div class="t" style="left:85.5px;width:200px;text-align:center;top:268.45px;font-size:21.5px;line-height:21.5px;color:#0d6efd;transform:scaleX(0.92);transform-origin:50% 0">59012</div>
<div class="t" style="left:276px;top:268.45px;font-size:21.5px;line-height:21.5px;color:#2a2a2a;transform:scaleX(0.82);transform-origin:0 0;">Yes</div>
<div class="t" style="left:390px;top:268.45px;font-size:21.5px;line-height:21.5px;color:#0d6efd;transform:scaleX(0.925);transform-origin:0 0;">Chen, Maya</div>
<div class="t" style="left:615px;top:268.45px;font-size:21.5px;line-height:21.5px;color:#0d6efd;transform:scaleX(0.9);transform-origin:0 0;">S2300459<span style="color:#333">...</span></div>
<div class="t" style="left:748px;top:268.45px;font-size:21.5px;line-height:21.5px;color:#2a2a2a;transform:scaleX(0.92);transform-origin:0 0;">18</div>
<div class="t" style="left:848px;top:268.45px;font-size:21.5px;line-height:21.5px;color:#2a2a2a;transform:scaleX(0.89);transform-origin:0 0;">87.00%</div>
<div class="t" style="left:1077px;top:268.45px;font-size:21.5px;line-height:21.5px;color:#2a2a2a;transform:scaleX(0.97);transform-origin:0 0;">No</div>
<div class="t" style="left:1237px;top:268.45px;font-size:21.5px;line-height:21.5px;color:#2a2a2a;transform:scaleX(0.89);transform-origin:0 0;">99.00%</div>
<div class="t" style="left:1462px;top:268.45px;font-size:21.5px;line-height:21.5px;color:#2a2a2a;transform:scaleX(0.98);transform-origin:0 0;">04/07/2025</div>
<div class="t" style="left:1593px;top:268.45px;font-size:21.5px;line-height:21.5px;color:#2a2a2a;transform:scaleX(0.96);transform-origin:0 0;">ns/26 wks</div>
<div class="t" style="left:1782px;top:268.45px;font-size:21.5px;line-height:21.5px;color:#2a2a2a;transform:scaleX(0.98);transform-origin:0 0;">06/01/2025</div>
<div style="position:absolute;left:41px;top:315.54999999999995px;width:23.5px;height:23.5px;border:1px solid #d6d6d6;border-radius:3.5px;background:#fff;box-sizing:border-box"></div>
<div class="t" style="left:85.5px;width:200px;text-align:center;top:318.95px;font-size:21.5px;line-height:21.5px;color:#0d6efd;transform:scaleX(0.92);transform-origin:50% 0">59011</div>
<div class="t" style="left:276px;top:318.95px;font-size:21.5px;line-height:21.5px;color:#2a2a2a;transform:scaleX(0.82);transform-origin:0 0;">Yes</div>
<div class="t" style="left:390px;top:318.95px;font-size:21.5px;line-height:21.5px;color:#0d6efd;transform:scaleX(0.925);transform-origin:0 0;">Hassan, Ahmed</div>
<div class="t" style="left:615px;top:318.95px;font-size:21.5px;line-height:21.5px;color:#0d6efd;transform:scaleX(0.9);transform-origin:0 0;">S2300459<span style="color:#333">...</span></div>
<div class="t" style="left:748px;top:318.95px;font-size:21.5px;line-height:21.5px;color:#2a2a2a;transform:scaleX(0.92);transform-origin:0 0;">20</div>
<div class="t" style="left:848px;top:318.95px;font-size:21.5px;line-height:21.5px;color:#2a2a2a;transform:scaleX(0.89);transform-origin:0 0;">93.00%</div>
<div class="t" style="left:1077px;top:318.95px;font-size:21.5px;line-height:21.5px;color:#2a2a2a;transform:scaleX(0.97);transform-origin:0 0;">No</div>
<div class="t" style="left:1237px;top:318.95px;font-size:21.5px;line-height:21.5px;color:#2a2a2a;transform:scaleX(0.89);transform-origin:0 0;">99.00%</div>
<div class="t" style="left:1462px;top:318.95px;font-size:21.5px;line-height:21.5px;color:#2a2a2a;transform:scaleX(0.98);transform-origin:0 0;">04/07/2025</div>
<div class="t" style="left:1593px;top:318.95px;font-size:21.5px;line-height:21.5px;color:#2a2a2a;transform:scaleX(0.96);transform-origin:0 0;">ns/26 wks</div>
<div class="t" style="left:1782px;top:318.95px;font-size:21.5px;line-height:21.5px;color:#2a2a2a;transform:scaleX(0.98);transform-origin:0 0;">06/01/2025</div>
<div style="position:absolute;left:41px;top:366.04999999999995px;width:23.5px;height:23.5px;border:1px solid #d6d6d6;border-radius:3.5px;background:#fff;box-sizing:border-box"></div>
<div class="t" style="left:85.5px;width:200px;text-align:center;top:369.45px;font-size:21.5px;line-height:21.5px;color:#0d6efd;transform:scaleX(0.92);transform-origin:50% 0">59010</div>
<div class="t" style="left:276px;top:369.45px;font-size:21.5px;line-height:21.5px;color:#2a2a2a;transform:scaleX(0.82);transform-origin:0 0;">Yes</div>
<div class="t" style="left:390px;top:369.45px;font-size:21.5px;line-height:21.5px;color:#0d6efd;transform:scaleX(0.925);transform-origin:0 0;">Ivanova, Sophia</div>
<div class="t" style="left:615px;top:369.45px;font-size:21.5px;line-height:21.5px;color:#0d6efd;transform:scaleX(0.9);transform-origin:0 0;">S2300459<span style="color:#333">...</span></div>
<div class="t" style="left:748px;top:369.45px;font-size:21.5px;line-height:21.5px;color:#2a2a2a;transform:scaleX(0.92);transform-origin:0 0;">18</div>
<div class="t" style="left:848px;top:369.45px;font-size:21.5px;line-height:21.5px;color:#2a2a2a;transform:scaleX(0.89);transform-origin:0 0;">100.00%</div>
<div class="t" style="left:1077px;top:369.45px;font-size:21.5px;line-height:21.5px;color:#2a2a2a;transform:scaleX(0.97);transform-origin:0 0;">No</div>
<div class="t" style="left:1237px;top:369.45px;font-size:21.5px;line-height:21.5px;color:#2a2a2a;transform:scaleX(0.89);transform-origin:0 0;">100.00%</div>
<div class="t" style="left:1462px;top:369.45px;font-size:21.5px;line-height:21.5px;color:#2a2a2a;transform:scaleX(0.98);transform-origin:0 0;">04/07/2025</div>
<div class="t" style="left:1593px;top:369.45px;font-size:21.5px;line-height:21.5px;color:#2a2a2a;transform:scaleX(0.96);transform-origin:0 0;">ns/26 wks</div>
<div class="t" style="left:1782px;top:369.45px;font-size:21.5px;line-height:21.5px;color:#2a2a2a;transform:scaleX(0.98);transform-origin:0 0;">06/01/2025</div>
<div style="position:absolute;left:41px;top:416.04999999999995px;width:23.5px;height:23.5px;border:1px solid #d6d6d6;border-radius:3.5px;background:#fff;box-sizing:border-box"></div>
<div class="t" style="left:85.5px;width:200px;text-align:center;top:419.45px;font-size:21.5px;line-height:21.5px;color:#0d6efd;transform:scaleX(0.92);transform-origin:50% 0">59009</div>
<div class="t" style="left:276px;top:419.45px;font-size:21.5px;line-height:21.5px;color:#2a2a2a;transform:scaleX(0.82);transform-origin:0 0;">Yes</div>
<div class="t" style="left:390px;top:419.45px;font-size:21.5px;line-height:21.5px;color:#0d6efd;transform:scaleX(0.925);transform-origin:0 0;">Patel, Arun</div>
<div class="t" style="left:615px;top:419.45px;font-size:21.5px;line-height:21.5px;color:#0d6efd;transform:scaleX(0.9);transform-origin:0 0;">S2300459<span style="color:#333">...</span></div>
<div class="t" style="left:748px;top:419.45px;font-size:21.5px;line-height:21.5px;color:#2a2a2a;transform:scaleX(0.92);transform-origin:0 0;">19</div>
<div class="t" style="left:848px;top:419.45px;font-size:21.5px;line-height:21.5px;color:#2a2a2a;transform:scaleX(0.89);transform-origin:0 0;">100.00%</div>
<div class="t" style="left:1077px;top:419.45px;font-size:21.5px;line-height:21.5px;color:#2a2a2a;transform:scaleX(0.97);transform-origin:0 0;">No</div>
<div class="t" style="left:1237px;top:419.45px;font-size:21.5px;line-height:21.5px;color:#2a2a2a;transform:scaleX(0.89);transform-origin:0 0;">100.00%</div>
<div class="t" style="left:1462px;top:419.45px;font-size:21.5px;line-height:21.5px;color:#2a2a2a;transform:scaleX(0.98);transform-origin:0 0;">04/07/2025</div>
<div class="t" style="left:1593px;top:419.45px;font-size:21.5px;line-height:21.5px;color:#2a2a2a;transform:scaleX(0.96);transform-origin:0 0;">01/26 wks</div>
<div class="t" style="left:1782px;top:419.45px;font-size:21.5px;line-height:21.5px;color:#2a2a2a;transform:scaleX(0.98);transform-origin:0 0;">06/01/2025</div>
</div>
<div style="position:absolute;left:166px;top:979px;width:1796px;height:1px;background:#ddd"></div>
<div style="position:absolute;left:166px;top:979px;width:1px;height:60px;background:#ddd"></div>
<div style="position:absolute;left:1961px;top:543px;width:1px;height:496px;background:#ddd"></div>
<div style="position:absolute;left:166px;top:1038px;width:1796px;height:1px;background:#ddd"></div>
<svg style="position:absolute;left:178px;top:994px;" width="30" height="30" viewBox="178 994 30 30"><path fill="#337ab7" d="M182.2 998 L202.9 998 L202.9 1002.6 L195.7 1009.8 L195.7 1018.7 L189.8 1018.7 L189.8 1009.8 L182.2 1002.6 Z"/></svg>
<div class="t" style="left:214px;top:1000.00px;font-size:21px;line-height:21px;color:#337ab7;transform:scaleX(0.965);transform-origin:0 0;">Create Filter</div>
<div style="position:absolute;left:289px;top:1052.5px;width:53px;height:52px;background:#d4d4d4;border-radius:4px"></div>
<div class="t" style="left:155.0px;width:80px;text-align:center;top:1069.65px;font-size:21.5px;line-height:21.5px;color:#333;transform:scaleX(0.895);transform-origin:50% 0;">10</div>
<div class="t" style="left:215.5px;width:80px;text-align:center;top:1069.65px;font-size:21.5px;line-height:21.5px;color:#333;transform:scaleX(0.895);transform-origin:50% 0;">20</div>
<div class="t" style="left:276.0px;width:80px;text-align:center;top:1069.65px;font-size:21.5px;line-height:21.5px;color:#333;transform:scaleX(0.895);transform-origin:50% 0;">50</div>
<div class="t" style="left:343.0px;width:80px;text-align:center;top:1069.65px;font-size:21.5px;line-height:21.5px;color:#333;transform:scaleX(0.895);transform-origin:50% 0;">100</div>
<div class="t" style="left:1218.5px;top:1069.45px;font-size:21.5px;line-height:21.5px;color:#666;transform:scaleX(0.953);transform-origin:0 0;">Page 1 of 987 (49311 items)</div>
<svg style="position:absolute;left:1506px;top:1064.5px;" width="20" height="26" viewBox="0 0 20 26"><path d="M16 2 L5 13 L16 24" fill="none" stroke="#c8c8c8" stroke-width="2.6"/></svg>
<div style="position:absolute;left:1549px;top:1052px;width:41px;height:53px;background:#d4d4d4;border-radius:4px"></div>
<div class="t" style="left:1529.5px;width:80px;text-align:center;top:1069.65px;font-size:21.5px;line-height:21.5px;color:#333;transform:scaleX(0.895);transform-origin:50% 0;">1</div>
<div class="t" style="left:1578.5px;width:80px;text-align:center;top:1069.65px;font-size:21.5px;line-height:21.5px;color:#333;transform:scaleX(0.895);transform-origin:50% 0;">2</div>
<div class="t" style="left:1628.0px;width:80px;text-align:center;top:1069.65px;font-size:21.5px;line-height:21.5px;color:#333;transform:scaleX(0.895);transform-origin:50% 0;">3</div>
<div class="t" style="left:1677.0px;width:80px;text-align:center;top:1069.65px;font-size:21.5px;line-height:21.5px;color:#333;transform:scaleX(0.895);transform-origin:50% 0;">4</div>
<div class="t" style="left:1726.0px;width:80px;text-align:center;top:1069.65px;font-size:21.5px;line-height:21.5px;color:#333;transform:scaleX(0.895);transform-origin:50% 0;">5</div>
<div class="t" style="left:1836.0px;width:80px;text-align:center;top:1069.65px;font-size:21.5px;line-height:21.5px;color:#333;transform:scaleX(0.895);transform-origin:50% 0;">987</div>
<div class="t" style="left:1800px;top:1069.25px;font-size:20.5px;line-height:20.5px;color:#333;">. . .</div>
<svg style="position:absolute;left:1926px;top:1064.5px;" width="20" height="26" viewBox="0 0 20 26"><path d="M4 2 L15 13 L4 24" fill="none" stroke="#222" stroke-width="3"/></svg>
<div style="position:absolute;left:145px;top:1034.3px;width:301px;height:90px;border:4.8px solid #e97b7b;box-sizing:border-box;box-shadow:2px 3px 5px rgba(0,0,0,0.28), inset -2px 3px 5px rgba(0,0,0,0.16)"></div>
<svg style="position:absolute;left:15px;top:1030px;" width="140" height="100" viewBox="15 1030 140 100"><defs><filter id="sh" x="-20%" y="-20%" width="140%" height="150%"><feDropShadow dx="1" dy="2.5" stdDeviation="2.2" flood-color="#000" flood-opacity="0.3"/></filter></defs><path filter="url(#sh)" fill="#fc4444" d="M65.3 1041.7 C70 1041.7 74 1042.6 78 1044.5 L143.2 1079.3 L78 1114.3 C74 1116.2 70 1117.1 65.3 1117.1 C44.5 1117.1 26.7 1100.2 26.7 1079.4 C26.7 1058.6 44.5 1041.7 65.3 1041.7 Z"/><path fill="#fff" d="M72.6 1063.8 L77.7 1063.8 L77.7 1094.2 L72.6 1094.2 L72.6 1070.6 Q69.6 1073 65.6 1074.5 L65.6 1069.6 Q70.2 1067.4 72.6 1063.8 Z"/></svg>
</body></html>
